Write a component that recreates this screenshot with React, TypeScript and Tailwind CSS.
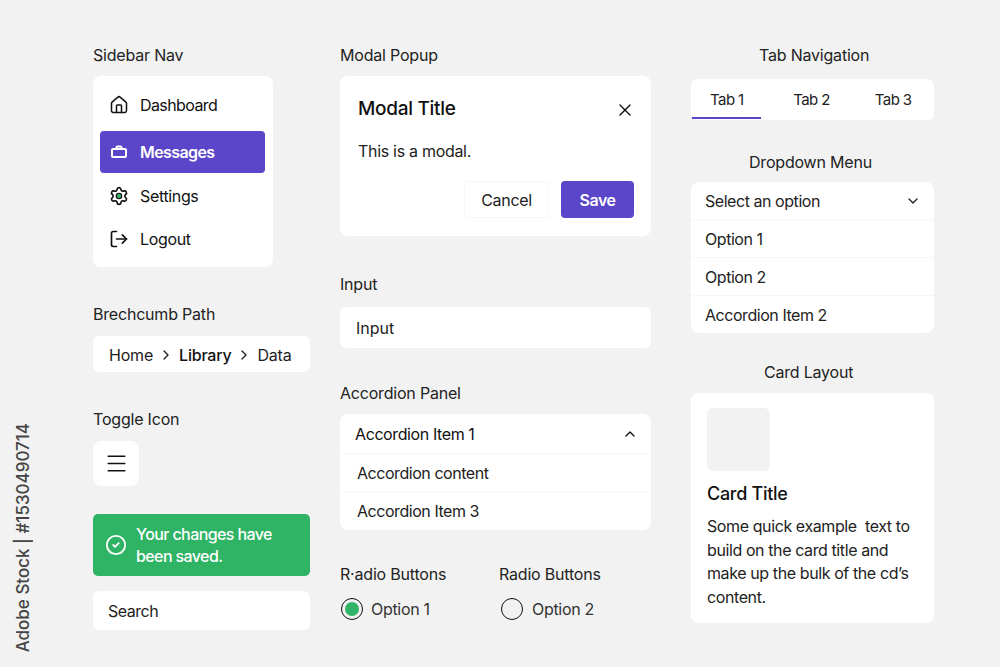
import { ChevronDown, ChevronRight, ChevronUp, CircleCheck, House, LogOut, Menu, Settings, X } from "lucide-react";
import type { ReactNode } from "react";

function Label({ children, className = "" }: { children: ReactNode; className?: string }) {
  return <div className={`h-6 text-[16px] leading-6 tracking-[-0.2px] text-[#222] ${className}`}>{children}</div>;
}

function NavItem({ icon, text, active, className = "", tracking = "tracking-[-0.35px]" }: { icon: ReactNode; text: string; active?: boolean; className?: string; tracking?: string }) {
  return (
    <div
      className={`flex h-[42px] items-center gap-[11px] rounded-[4px] pl-[9px] text-[16px] ${tracking} ${
        active ? "bg-[#5b46c9] font-semibold text-white" : "text-[#111]"
      } ${className}`}
    >
      {icon}
      <span>{text}</span>
    </div>
  );
}

function BriefcaseIcon() {
  return (
    <svg width="20" height="20" viewBox="0 0 20 20" fill="none" stroke="currentColor" strokeWidth="2">
      <rect x="3" y="7" width="14" height="8" rx="1" />
      <path d="M7.5 7V5.5a1 1 0 0 1 1-1h3a1 1 0 0 1 1 1V7" />
    </svg>
  );
}

function Row({ children, border = true }: { children: ReactNode; border?: boolean }) {
  return (
    <div className={`flex h-[38px] items-center px-[15px] text-[16px] tracking-[-0.45px] text-[#222] ${border ? "border-b border-[#f7f7f7]" : ""}`}>
      {children}
    </div>
  );
}

function Radio({ label, text, checked, className = "", offset = "" }: { label: string; text: string; checked?: boolean; className?: string; offset?: string }) {
  return (
    <div className={className}>
      <Label>{label}</Label>
      <div className={`mt-[11px] flex items-center ${offset}`}>
        <div className="flex h-[22px] w-[22px] items-center justify-center rounded-full border-[1.5px] border-[#111]">
          {checked && <div className="h-[14px] w-[14px] rounded-full bg-[#2fb364]" />}
        </div>
        <span className="text-[16px] tracking-[-0.3px] text-[#333]">{text}</span>
      </div>
    </div>
  );
}

export default function App() {
  return (
    <div className="relative flex h-[667px] w-[1000px] overflow-hidden bg-[#f2f2f2] pl-[93px] pt-[43px] font-['Inter',sans-serif]">
      <div className="absolute bottom-[15px] left-[13px] rotate-180 text-[17px] font-medium leading-5 text-[#444] [writing-mode:vertical-rl]">
        Adobe Stock | #1530490714
      </div>

      {/* left column */}
      <div className="w-[217px]">
        <Label>Sidebar Nav</Label>
        <div className="mt-[9px] w-[180px] rounded-lg bg-white pb-[7px] pl-[7px] pr-[8px] pt-[8px]">
          <NavItem icon={<House size={20} strokeWidth={1.8} />} text="Dashboard" tracking="tracking-[-0.6px]" />
          <NavItem icon={<BriefcaseIcon />} text="Messages" active tracking="tracking-[-0.6px]" className="mt-[5px]" />
          <NavItem
            icon={
              <span className="relative flex">
                <Settings size={20} strokeWidth={2} className="text-[#111]" />
                <span className="absolute left-[8px] top-[8px] h-[4px] w-[4px] rounded-full bg-[#2fb364]" />
              </span>
            }
            text="Settings"
            className="mt-[2px]"
          />
          <NavItem icon={<LogOut size={20} strokeWidth={2} />} text="Logout" className="mt-[1px]" />
        </div>

        <Label className="mt-[35px]">Brechcumb Path</Label>
        <div className="mt-[10px] flex h-[36px] items-center rounded-md bg-white pl-4 pt-px text-[16px] tracking-[-0.2px] text-[#222]">
          <span>Home</span>
          <ChevronRight size={16} className="mx-[5px]" />
          <span className="font-medium text-[#111]">Library</span>
          <ChevronRight size={16} className="mx-[5px]" />
          <span>Data</span>
        </div>

        <Label className="mt-[35px]">Toggle Icon</Label>
        <div className="mt-[10px] flex h-[45px] w-[46px] items-center justify-center rounded-lg bg-white">
          <Menu size={25} strokeWidth={1.45} className="text-[#111]" />
        </div>

        <div className="mt-[28px] flex h-[62px] items-center gap-[9px] rounded-[5px] bg-[#2fb364] pl-[12px] text-[16px] font-medium leading-[22px] tracking-[-0.6px] text-white">
          <CircleCheck size={22} strokeWidth={2} className="shrink-0" />
          <span>
            Your changes have
            <br />
            been saved.
          </span>
        </div>

        <div className="mt-[15px] flex h-[39px] items-center rounded-md bg-white pl-[15px] text-[16px] tracking-[-0.5px] text-[#222]">Search</div>
      </div>

      {/* middle column */}
      <div className="ml-[30px] w-[311px]">
        <Label>Modal Popup</Label>
        <div className="mt-[9px] h-[160px] rounded-lg bg-white px-[18px] pt-[20px]">
          <div className="flex h-[26px] items-center justify-between pt-px">
            <span className="text-[19px] font-medium tracking-[-0.3px] text-[#111]">Modal Title</span>
            <X size={20} strokeWidth={1.6} className="mr-[-2px] text-[#111]" />
          </div>
          <div className="mt-[17px] text-[16px] leading-6 tracking-[-0.3px] text-[#222]">This is a modal.</div>
          <div className="mt-[18px] flex justify-end gap-3">
            <div className="flex h-[37px] w-[85px] items-center justify-center rounded-[4px] border border-[#f7f7f7] text-[16px] tracking-[-0.3px] text-[#222]">Cancel</div>
            <div className="mr-[-1px] flex h-[37px] w-[73px] items-center justify-center rounded-[4px] bg-[#5b46c9] text-[16px] font-semibold tracking-[-0.5px] text-white">Save</div>
          </div>
        </div>

        <Label className="mt-[36px]">Input</Label>
        <div className="mt-[11px] flex h-[41px] items-center rounded-md bg-white pl-[16px] text-[16px] text-[#222]">Input</div>

        <Label className="mt-[33px]">Accordion Panel</Label>
        <div className="mt-[9px] h-[116px] rounded-lg bg-white pt-px">
          <div className="flex h-[39px] items-center justify-between border-b border-[#f7f7f7] pl-[15px] pr-[13px] text-[16px] tracking-[-0.4px] text-[#111]">
            <span>Accordion Item 1</span>
            <ChevronUp size={16} strokeWidth={2} />
          </div>
          <Row>
            <span className="pl-[2px]">Accordion content</span>
          </Row>
          <Row border={false}>
            <span className="pl-[2px]">Accordion Item 3</span>
          </Row>
        </div>

        <div className="mt-[32px] flex">
          <Radio label="R·adio Buttons" text="Option 1" checked offset="ml-px gap-[8px]" className="w-[159px]" />
          <Radio label="Radio Buttons" text="Option 2" offset="ml-[2px] gap-[9px]" />
        </div>
      </div>

      {/* right column */}
      <div className="ml-[40px] w-[243px]">
        <Label className="pl-[68px]">Tab Navigation</Label>
        <div className="mt-3 flex h-[41px] items-center rounded-md bg-white pt-[2px] text-[15px] tracking-[-0.6px] text-[#222]">
          <div className="relative flex h-full w-[72px] items-center justify-center">
            Tab 1
            <div className="absolute bottom-[1px] left-[1px] h-[2px] w-[69px] bg-[#5b46c9]" />
          </div>
          <div className="ml-[8px] w-[82px] text-center">Tab 2</div>
          <div className="w-[82px] text-center">Tab 3</div>
        </div>

        <Label className="mt-[30px] pl-[58px]">Dropdown Menu</Label>
        <div className="mt-[8px] h-[151px] rounded-lg bg-white">
          <div className="flex h-[38px] items-center justify-between border-b border-[#f7f7f7] pl-[14px] pr-[13px] text-[16px] tracking-[-0.45px] text-[#222]">
            <span>Select an option</span>
            <ChevronDown size={16} strokeWidth={2} />
          </div>
          <Row>
            <span className="-ml-px">Option 1</span>
          </Row>
          <Row>
            <span className="-ml-px">Option 2</span>
          </Row>
          <Row border={false}>
            <span className="-ml-px">Accordion Item 2</span>
          </Row>
        </div>

        <Label className="mt-[27px] pl-[73px]">Card Layout</Label>
        <div className="mt-[9px] h-[230px] rounded-lg bg-white px-4 pt-[15px]">
          <div className="h-[63px] w-[63px] rounded-md bg-[#f2f2f2]" />
          <div className="mt-[10px] text-[18px] font-medium leading-[26px] tracking-[-0.3px] text-[#111]">Card Title</div>
          <p className="mt-[8px] whitespace-pre text-[16px] leading-[23.7px] tracking-[-0.4px] text-[#222]">
            {"Some quick example  text to\nbuild on the card title and\nmake up the bulk of the cd’s\ncontent."}
          </p>
        </div>
      </div>
    </div>
  );
}
